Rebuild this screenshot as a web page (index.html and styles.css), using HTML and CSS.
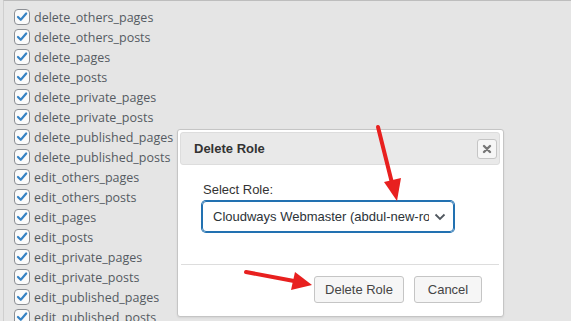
FILE: index.html
```html
<!DOCTYPE html>
<html>
<head>
<meta charset="utf-8">
<link rel="stylesheet" href="styles.css">
</head>
<body>
<div class="panel">
  <ul class="caps">
    <li><span class="cb"><svg viewBox="0 0 16 16"><path d="M3.4 8 L6.6 11.2 L12.8 4" /></svg></span>delete_others_pages</li>
    <li><span class="cb"><svg viewBox="0 0 16 16"><path d="M3.4 8 L6.6 11.2 L12.8 4" /></svg></span>delete_others_posts</li>
    <li><span class="cb"><svg viewBox="0 0 16 16"><path d="M3.4 8 L6.6 11.2 L12.8 4" /></svg></span>delete_pages</li>
    <li><span class="cb"><svg viewBox="0 0 16 16"><path d="M3.4 8 L6.6 11.2 L12.8 4" /></svg></span>delete_posts</li>
    <li><span class="cb"><svg viewBox="0 0 16 16"><path d="M3.4 8 L6.6 11.2 L12.8 4" /></svg></span>delete_private_pages</li>
    <li><span class="cb"><svg viewBox="0 0 16 16"><path d="M3.4 8 L6.6 11.2 L12.8 4" /></svg></span>delete_private_posts</li>
    <li><span class="cb"><svg viewBox="0 0 16 16"><path d="M3.4 8 L6.6 11.2 L12.8 4" /></svg></span>delete_published_pages</li>
    <li><span class="cb"><svg viewBox="0 0 16 16"><path d="M3.4 8 L6.6 11.2 L12.8 4" /></svg></span>delete_published_posts</li>
    <li><span class="cb"><svg viewBox="0 0 16 16"><path d="M3.4 8 L6.6 11.2 L12.8 4" /></svg></span>edit_others_pages</li>
    <li><span class="cb"><svg viewBox="0 0 16 16"><path d="M3.4 8 L6.6 11.2 L12.8 4" /></svg></span>edit_others_posts</li>
    <li><span class="cb"><svg viewBox="0 0 16 16"><path d="M3.4 8 L6.6 11.2 L12.8 4" /></svg></span>edit_pages</li>
    <li><span class="cb"><svg viewBox="0 0 16 16"><path d="M3.4 8 L6.6 11.2 L12.8 4" /></svg></span>edit_posts</li>
    <li><span class="cb"><svg viewBox="0 0 16 16"><path d="M3.4 8 L6.6 11.2 L12.8 4" /></svg></span>edit_private_pages</li>
    <li><span class="cb"><svg viewBox="0 0 16 16"><path d="M3.4 8 L6.6 11.2 L12.8 4" /></svg></span>edit_private_posts</li>
    <li><span class="cb"><svg viewBox="0 0 16 16"><path d="M3.4 8 L6.6 11.2 L12.8 4" /></svg></span>edit_published_pages</li>
    <li><span class="cb"><svg viewBox="0 0 16 16"><path d="M3.4 8 L6.6 11.2 L12.8 4" /></svg></span>edit_published_posts</li>
  </ul>
</div>

<div class="dialog">
  <div class="titlebar">
    <span class="title">Delete Role</span>
    <button class="close"><svg viewBox="0 0 10 10"><path d="M2 2 L8 8 M8 2 L2 8" /></svg></button>
  </div>
  <div class="content">
    <div class="label">Select Role:</div>
    <div class="select">
      <span class="sel-text">Cloudways Webmaster (abdul-new-role)</span>
      <svg class="chev" viewBox="0 0 12 8"><path d="M1.5 1.5 L6 6 L10.5 1.5" /></svg>
    </div>
  </div>
  <div class="buttonpane">
    <button class="btn btn-del">Delete Role</button>
    <button class="btn btn-cancel">Cancel</button>
  </div>
</div>

<svg class="arrows" width="571" height="321" viewBox="0 0 571 321">
  <line x1="378" y1="127" x2="392" y2="183" stroke="#e8201f" stroke-width="4" stroke-linecap="round"/>
  <polygon points="397,201 384,182 401,178" fill="#e8201f"/>
  <line x1="246" y1="272" x2="294" y2="281" stroke="#e8201f" stroke-width="4" stroke-linecap="round"/>
  <polygon points="312,285 291,290 295,272" fill="#e8201f"/>
</svg>
</body>
</html>
```

FILE: styles.css
```css
* { box-sizing: border-box; }
html, body {
  margin: 0;
  padding: 0;
  width: 571px;
  height: 321px;
  overflow: hidden;
  background: #e5e5e5;
}
body { position: relative; }

.panel {
  margin-left: 3px;
  height: 321px;
  border-top: 1px solid #bdbdbd;
  border-left: 1px solid #cfcfcf;
  padding: 6px 0 0 10px;
}
.caps {
  list-style: none;
  margin: 0;
  padding: 0;
  display: flex;
  flex-direction: column;
}
.caps li {
  height: 20px;
  display: flex;
  align-items: center;
  gap: 4px;
  font-family: "Open Sans", sans-serif;
  font-size: 12.5px;
  color: #555b62;
  white-space: nowrap;
}
.cb {
  width: 16px;
  height: 16px;
  border: 1px solid #8c8f94;
  border-radius: 4px;
  background: #fafafa;
  display: inline-flex;
  flex: none;
}
.cb svg { width: 14px; height: 14px; }
.cb path {
  fill: none;
  stroke: #3582c4;
  stroke-width: 2.5;
  stroke-linecap: round;
  stroke-linejoin: round;
}

.dialog {
  position: absolute;
  left: 177px;
  top: 129px;
  width: 327px;
  height: 188px;
  background: #fff;
  border: 1px solid #c5c5c5;
  border-radius: 3px;
  padding: 2px 3px 2px 2px;
  display: flex;
  flex-direction: column;
  font-family: "Liberation Sans", Arial, sans-serif;
  font-size: 13px;
  color: #333;
  box-shadow: 0 1px 2px rgba(0,0,0,0.08);
}
.titlebar {
  height: 33px;
  background: #e9e9e9;
  border: 1px solid #dddddd;
  border-radius: 3px;
  display: flex;
  align-items: center;
  justify-content: space-between;
  padding: 0 2px 0 13px;
}
.title {
  font-weight: bold;
  color: #333;
}
.close {
  width: 20px;
  height: 20px;
  padding: 0;
  border: 1px solid #c5c5c5;
  border-radius: 3px;
  background: #f6f6f6;
  display: flex;
  align-items: center;
  justify-content: center;
}
.close svg { width: 10px; height: 10px; }
.close path {
  stroke: #777;
  stroke-width: 2.4;
  stroke-linecap: round;
}

.content {
  flex: 1;
  padding: 17px 0 0 23px;
}
.label {
  line-height: 16px;
  color: #333;
}
.select {
  margin-top: 3px;
  margin-left: -1px;
  width: 252px;
  height: 31px;
  border: 1px solid #2271b1;
  box-shadow: 0 0 0 1px #2271b1;
  border-radius: 4px;
  display: flex;
  align-items: center;
  padding: 0 7px 0 10px;
  gap: 5px;
}
.sel-text {
  flex: 1;
  overflow: hidden;
  white-space: nowrap;
  color: #2c3338;
}
.chev { width: 12px; height: 8px; flex: none; }
.chev path {
  fill: none;
  stroke: #50575e;
  stroke-width: 1.8;
}

.buttonpane {
  border-top: 1px solid #dddddd;
  margin: 0 1px 0 1px;
  padding: 11px 17px 11px 0;
  display: flex;
  justify-content: flex-end;
  gap: 10px;
}
.btn {
  height: 27px;
  padding: 0;
  white-space: nowrap;
  border: 1px solid #c5c5c5;
  border-radius: 3px;
  background: #f6f6f6;
  color: #454545;
  font-family: "Liberation Sans", Arial, sans-serif;
  font-size: 13px;
}
.btn-del { width: 90px; }
.btn-cancel { width: 68px; }

.arrows {
  position: absolute;
  left: 0;
  top: 0;
  pointer-events: none;
}
```
